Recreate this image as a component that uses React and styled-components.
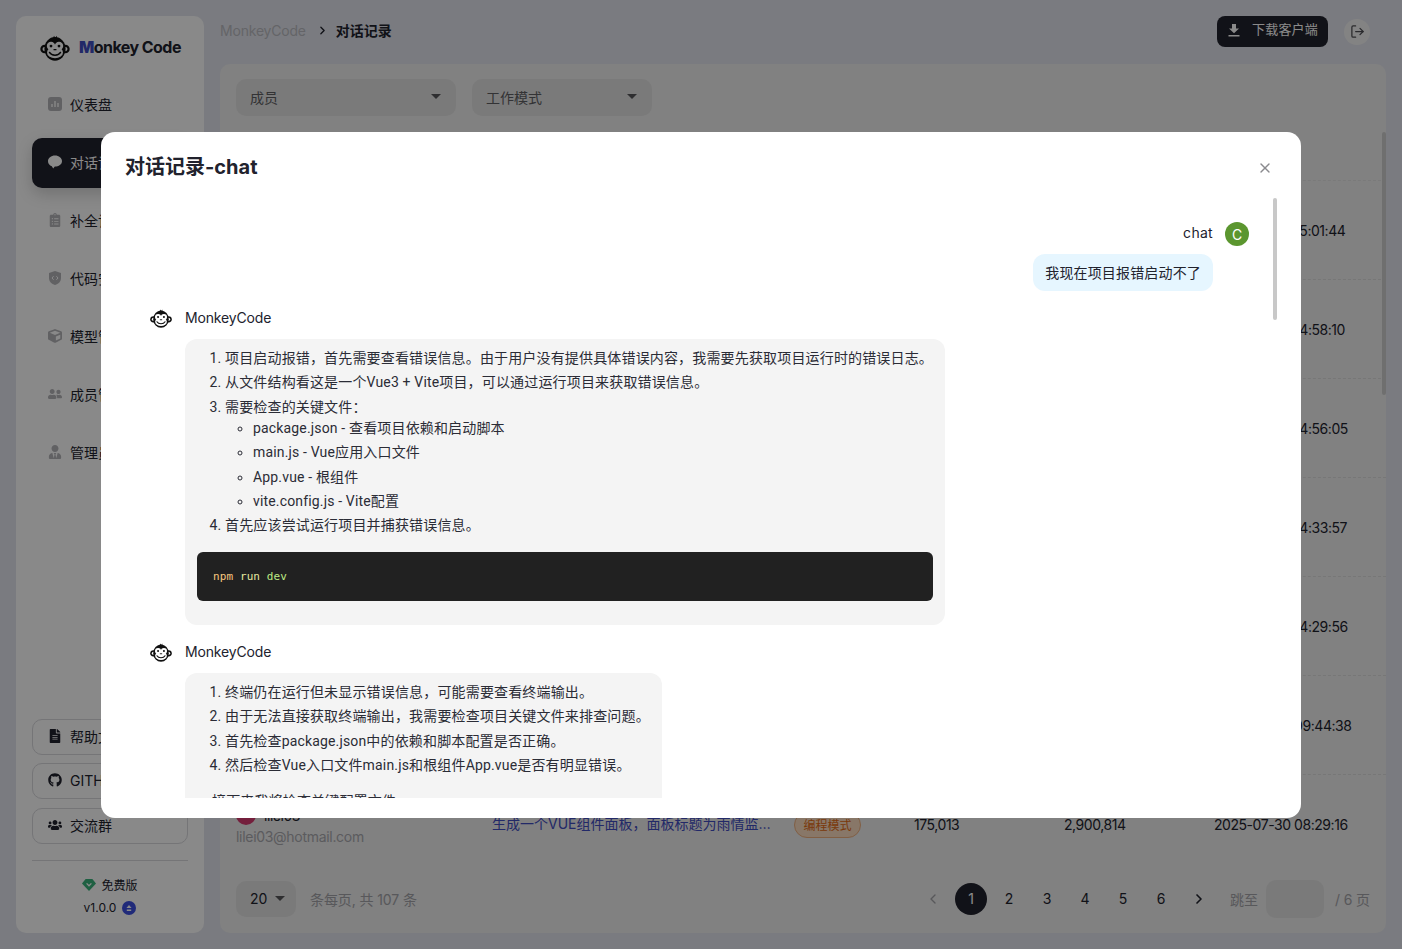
import React from "react";
import styled, { createGlobalStyle } from "styled-components";
import { FaClipboardList, FaCube, FaFileAlt, FaGithub, FaUserFriends, FaUsers, FaUserTie } from "react-icons/fa";
import { ChevronLeft, ChevronRight, LogOut, X } from "lucide-react";

const uiFont = `Inter, "Noto Sans CJK SC", sans-serif`;
const bodyFont = `Roboto, "Noto Sans CJK SC", sans-serif`;

const GlobalStyle = createGlobalStyle`
  html, body {
    margin: 0;
    height: 100%;
    overflow: hidden;
  }
  body {
    background: #e2e4ec;
    color: #21222d;
    font-family: ${uiFont};
    font-size: 14px;
  }
  * {
    box-sizing: border-box;
  }
`;

const Shell = styled.div`
  display: flex;
  gap: 16px;
  height: 949px;
  padding: 0 16px 16px;
`;

const Sidebar = styled.aside`
  display: flex;
  flex-direction: column;
  flex: 0 0 188px;
  margin-top: 16px;
  padding: 0 16px;
  background: #fdfdfd;
  border-radius: 10px;
`;

const Brand = styled.div`
  display: flex;
  align-items: center;
  gap: 9px;
  height: 64px;
  padding-left: 8px;
  font-size: 16px;
  font-weight: 700;
  letter-spacing: -0.55px;
  b {
    color: #3f4cc0;
  }
  span {
    padding-bottom: 3px;
  }
`;

const NavList = styled.nav`
  display: flex;
  flex-direction: column;
  gap: 8px;
`;

const NavItem = styled.div`
  display: flex;
  align-items: center;
  gap: 8px;
  height: 50px;
  padding: 0 0 2px 16px;
  border-radius: 10px;
  color: ${(p) => (p.$active ? "#ffffff" : "#21222d")};
  background: ${(p) => (p.$active ? "#21222d" : "transparent")};
  box-shadow: ${(p) => (p.$active ? "0 6px 16px rgba(0,0,0,.18)" : "none")};
  svg {
    flex: 0 0 14px;
    color: ${(p) => (p.$active ? "#ffffff" : "#b4b4b8")};
  }
`;

const SideFoot = styled.div`
  margin-top: auto;
  display: flex;
  flex-direction: column;
`;

const LinkButton = styled.div`
  display: flex;
  align-items: center;
  gap: 8px;
  height: 36px;
  margin-bottom: 8.5px;
  padding: 0 0 2px 15px;
  border: 1px solid #d8d8dc;
  border-radius: 10px;
  svg {
    flex: 0 0 14px;
  }
`;

const Divider = styled.div`
  margin-top: 8px;
  border-top: 1px solid #d8d8dc;
`;

const Plan = styled.div`
  display: flex;
  align-items: center;
  justify-content: center;
  gap: 5px;
  margin-top: 15px;
  font-size: 12px;
`;

const Version = styled.div`
  display: flex;
  align-items: center;
  justify-content: center;
  gap: 6px;
  margin: 7px 0 18px;
  font-size: 12px;
`;

const Main = styled.main`
  display: flex;
  flex-direction: column;
  flex: 1;
  min-width: 0;
`;

const TopBar = styled.header`
  display: flex;
  align-items: center;
  flex: 0 0 64px;
  padding-bottom: 1px;
`;

const Crumbs = styled.div`
  display: flex;
  align-items: center;
  gap: 8px;
  flex: 1;
  padding-bottom: 3px;
  svg {
    margin: 0 -1px 0 2px;
  }
`;

const CrumbRoot = styled.span`
  color: #b9bac0;
  letter-spacing: -0.2px;
`;

const CrumbHere = styled.span`
  font-weight: 700;
`;

const DownloadButton = styled.div`
  display: flex;
  align-items: center;
  gap: 11px;
  height: 31px;
  margin-right: 16px;
  padding: 0 10px 7px;
  color: #fff;
  background: #21222d;
  border-radius: 8px;
  font-size: 13px;
  letter-spacing: 0.2px;
  svg {
    margin-top: 4px;
  }
`;

const RoundButton = styled.div`
  display: flex;
  align-items: center;
  justify-content: center;
  width: 26px;
  height: 26px;
  margin-right: 16px;
  border-radius: 50%;
  background: #f3f3f3;
  color: #4d4d52;
`;

const Card = styled.section`
  display: flex;
  flex-direction: column;
  flex: 1;
  position: relative;
  background: #eeeeee;
  border-radius: 10px;
  overflow: hidden;
`;

const Filters = styled.div`
  display: flex;
  gap: 16px;
  flex: 0 0 68px;
  padding: 15px 16px 0;
`;

const Select = styled.div`
  display: flex;
  align-items: center;
  justify-content: space-between;
  width: ${(p) => p.$width}px;
  height: 37px;
  padding: 0 15px 2px 14px;
  background: #e2e2e2;
  border-radius: 10px;
  color: #5e5e63;
`;

const Caret = styled.i`
  display: block;
  width: 0;
  height: 0;
  border-left: 5px solid transparent;
  border-right: 5px solid transparent;
  border-top: 5px solid #55555a;
`;

const Table = styled.div`
  flex: 0 0 742px;
  padding-left: 16px;
  overflow: hidden;
`;

const Row = styled.div`
  display: grid;
  grid-template-columns: 256px 302px 120px 150px 150px 1fr;
  align-items: center;
  height: ${(p) => (p.$head ? 49 : 99)}px;
  border-bottom: 1px dashed ${(p) => (p.$head ? "#e2e2e2" : "#dcdcdc")};
  color: ${(p) => (p.$head ? "#77777c" : "#21222d")};
  letter-spacing: -0.45px;
  &:last-child {
    border-bottom: 0;
  }
`;

const User = styled.div`
  display: grid;
  grid-template-columns: 20px 1fr;
  column-gap: 8px;
  align-items: center;
  margin-top: 5px;
`;

const UserAvatar = styled.span`
  width: 20px;
  height: 20px;
  border-radius: 50%;
  background: #d63a70;
`;

const Email = styled.span`
  grid-column: 1 / -1;
  color: #a9a9ae;
  line-height: 24px;
  letter-spacing: -0.3px;
`;

const Prompt = styled.div`
  width: 282px;
  padding-bottom: 3px;
  color: #3f4cc0;
  letter-spacing: 0;
  white-space: nowrap;
  overflow: hidden;
  text-overflow: ellipsis;
`;

const Tag = styled.span`
  display: inline-flex;
  align-items: center;
  justify-content: center;
  width: 67px;
  height: 26px;
  border: 1px solid #eeaf7e;
  border-radius: 13px;
  background: #fbdcc0;
  color: #e26a14;
  font-size: 12px;
  letter-spacing: 0;
`;

const Pager = styled.div`
  display: flex;
  align-items: center;
  padding: 0 16px 10px;
  flex: 1;
  color: #a3a3a8;
  letter-spacing: -0.1px;
`;

const PageSize = styled.div`
  display: flex;
  align-items: center;
  gap: 8px;
  width: 60px;
  height: 36px;
  margin-right: 14px;
  padding-left: 14px;
  background: #e2e2e2;
  border-radius: 10px;
  color: #21222d;
`;

const PageSpacer = styled.div`
  flex: 1;
`;

const PageButton = styled.span`
  display: flex;
  align-items: center;
  justify-content: center;
  width: 32px;
  height: 32px;
  margin-right: ${(p) => (p.$last ? 15 : 6)}px;
  border-radius: 50%;
  color: ${(p) => (p.$active ? "#fff" : p.$muted ? "#a3a3a8" : "#21222d")};
  background: ${(p) => (p.$active ? "#21222d" : "transparent")};
`;

const JumpInput = styled.div`
  width: 58px;
  height: 38px;
  margin: 0 11px 0 8px;
  background: #e2e2e2;
  border-radius: 10px;
`;

const TableThumb = styled.div`
  position: absolute;
  top: 68px;
  right: 0;
  width: 4px;
  height: 263px;
  border-radius: 2px;
  background: #cdcdcd;
`;

const Overlay = styled.div`
  position: fixed;
  inset: 0;
  display: flex;
  justify-content: center;
  padding-top: 132px;
  background: rgba(0, 0, 0, 0.46);
`;

const Modal = styled.div`
  position: relative;
  display: flex;
  flex-direction: column;
  width: 1200px;
  height: 686px;
  padding-bottom: 20px;
  background: #ffffff;
  border-radius: 14px;
`;

const ModalHead = styled.div`
  display: flex;
  align-items: center;
  justify-content: space-between;
  flex: 0 0 66px;
  padding: 1px 28px 0 24px;
  font-size: 20px;
  font-weight: 700;
  color: #21222d;
  svg {
    margin-top: 4px;
    color: #8a8a8e;
  }
`;

const ChatBody = styled.div`
  flex: 1;
  padding: 24px 52px 0 49px;
  overflow: hidden;
`;

const ChatThumb = styled.div`
  position: absolute;
  top: 66px;
  right: 24px;
  width: 4px;
  height: 122px;
  border-radius: 2px;
  background: #c8c8c8;
`;

const UserLine = styled.div`
  display: flex;
  align-items: center;
  justify-content: flex-end;
  gap: 12px;
  height: 24px;
`;

const UserName = styled.span`
  margin-bottom: 4px;
  letter-spacing: 0.3px;
`;

const ChatAvatar = styled.span`
  display: flex;
  align-items: center;
  justify-content: center;
  width: 24px;
  height: 24px;
  border-radius: 50%;
  background: #5b962f;
  color: #fff;
  font-size: 14px;
`;

const UserBubble = styled.div`
  width: fit-content;
  margin: 8px 36px 0 auto;
  padding: 9px 12px 7px;
  background: #e6f6ff;
  border-radius: 12px;
  font-family: ${bodyFont};
  line-height: 21px;
  letter-spacing: 0.16px;
  color: #21222d;
`;

const BotLine = styled.div`
  display: flex;
  align-items: center;
  gap: 13px;
  height: 22px;
  margin-top: 17px;
  letter-spacing: -0.15px;
  span {
    padding-bottom: 3px;
  }
`;

const BotBubble = styled.div`
  width: fit-content;
  max-width: 760px;
  margin: 9px 0 0 35px;
  padding: 9px 12px 12px;
  background: #f4f4f4;
  border-radius: 12px;
  font-family: ${bodyFont};
  line-height: 21px;
  letter-spacing: 0.16px;
  color: #2b2c36;
`;

const Ordered = styled.ol`
  margin: 0;
  padding-left: 28px;
`;

const Bullets = styled.ul`
  margin: 0;
  padding-left: 28px;
  list-style: circle;
`;

const Item = styled.li`
  margin-bottom: 3.4px;
  ${Bullets} &:last-child {
    margin-bottom: 0;
  }
`;

const Note = styled.p`
  margin: 15px 0 0 15px;
`;

const CodeBlock = styled.pre`
  margin: 15.5px 0 12px;
  padding: 16px;
  height: 49px;
  background: #212121;
  border-radius: 6px;
  font-family: "DejaVu Sans Mono", monospace;
  font-size: 11px;
  font-weight: 500;
  letter-spacing: 0.1px;
  line-height: 17px;
  color: #c6e38a;
`;

const CodeWord = styled.span`
  color: ${(p) => p.$color};
`;

const Monkey = ({ size = 30 }) => (
  <svg width={size} height={size * 0.87} viewBox="0 0 30 26">
    <path d="M13 3.5 L14 .8 L15.2 2.8 L17 .8 L16.8 3.8 Z" fill="#111" />
    <circle cx="4.6" cy="14" r="4.3" fill="#111" />
    <circle cx="25.4" cy="14" r="4.3" fill="#111" />
    <circle cx="4.6" cy="14" r="2.1" fill="#fff" />
    <circle cx="25.4" cy="14" r="2.1" fill="#fff" />
    <ellipse cx="15" cy="13.8" rx="10.6" ry="11.8" fill="#111" />
    <circle cx="11" cy="11" r="4.2" fill="#fff" />
    <circle cx="19" cy="11" r="4.2" fill="#fff" />
    <ellipse cx="15" cy="17.4" rx="8" ry="5.9" fill="#fff" />
    <circle cx="11" cy="11" r="1.4" fill="#111" />
    <circle cx="19" cy="11" r="1.4" fill="#111" />
    <path d="M9.5 17.4 C11.5 21 18.5 21 20.5 17.4" fill="none" stroke="#111" strokeWidth="1.5" strokeLinecap="round" />
    <path d="M14 14.6 H16" stroke="#111" strokeWidth="1.2" strokeLinecap="round" />
  </svg>
);

const ChartIcon = () => (
  <svg width="14" height="14" viewBox="0 0 14 14">
    <rect width="14" height="14" rx="3" fill="currentColor" />
    <path d="M4 10V7M7 10V4M10 10V6" stroke="#fff" strokeWidth="1.3" />
  </svg>
);

const BubbleIcon = () => (
  <svg width="14" height="14" viewBox="0 0 14 14">
    <path d="M7 0.5C3.1 .5 0 3 0 6.2c0 2.3 1.5 4.2 3.8 5.1L5.2 13.5l1.6-1.9C10.8 11.6 14 9.3 14 6.2 14 3 10.9 .5 7 .5Z" fill="currentColor" />
  </svg>
);

const ShieldIcon = () => (
  <svg width="14" height="14" viewBox="0 0 14 14">
    <path d="M7 0 13 2V7C13 10.5 10.5 13 7 14 3.5 13 1 10.5 1 7V2Z" fill="currentColor" />
    <path d="M5.6 5.2 4 7l1.6 1.8M8.4 5.2 10 7 8.4 8.8" fill="none" stroke="#fff" strokeWidth="1" />
  </svg>
);

const DownloadIcon = () => (
  <svg width="14" height="14" viewBox="0 0 14 14">
    <path d="M5 1H9V5.5H12L7 10.2 2 5.5H5Z M1.5 12H12.5V13.5H1.5Z" fill="currentColor" />
  </svg>
);

const PlanIcon = () => (
  <svg width="14" height="12" viewBox="0 0 14 12">
    <path d="M3.6 0H10.4L14 4.6 7 12 0 4.6Z" fill="#38b27b" />
    <path d="M4.6 4.4 7 6.8 9.4 4.4" fill="none" stroke="#fff" strokeWidth="1.3" />
  </svg>
);

const UpdateIcon = () => (
  <svg width="14" height="14" viewBox="0 0 14 14">
    <circle cx="7" cy="7" r="7" fill="#3b4ee0" />
    <path d="M7 4 9.6 7H4.4Z M4.8 8.4H9.2V10H4.8Z" fill="#fff" />
  </svg>
);

const navItems = [
  { label: "仪表盘", icon: <ChartIcon /> },
  { label: "对话记录", icon: <BubbleIcon />, active: true },
  { label: "补全记录", icon: <FaClipboardList size={14} /> },
  { label: "代码安全", icon: <ShieldIcon /> },
  { label: "模型管理", icon: <FaCube size={14} /> },
  { label: "成员管理", icon: <FaUserFriends size={14} /> },
  { label: "管理员", icon: <FaUserTie size={14} /> },
];

const rows = [
  { name: "chat", email: "chat@monkeycode.ai", prompt: "我现在项目报错启动不了", input: "82,410", output: "1,204,332", time: "2025-07-30 15:01:44" },
  { name: "chat", email: "chat@monkeycode.ai", prompt: "帮我写一个登录页面", input: "61,225", output: "903,118", time: "2025-07-30 14:58:10" },
  { name: "chat", email: "chat@monkeycode.ai", prompt: "检查项目依赖和启动脚本", input: "44,870", output: "512,096", time: "2025-07-30 14:56:05" },
  { name: "chat", email: "chat@monkeycode.ai", prompt: "优化首页加载速度", input: "93,518", output: "1,480,227", time: "2025-07-30 14:33:57" },
  { name: "chat", email: "chat@monkeycode.ai", prompt: "添加一个用户列表组件", input: "37,602", output: "641,950", time: "2025-07-30 14:29:56" },
  { name: "lilei03", email: "lilei03@hotmail.com", prompt: "生成一个图表组件", input: "120,744", output: "2,118,605", time: "2025-07-30 09:44:38" },
  { name: "lilei03", email: "lilei03@hotmail.com", prompt: "生成一个VUE组件面板，面板标题为雨情监测信息展示", input: "175,013", output: "2,900,814", time: "2025-07-30 08:29:16" },
];

const App = () => (
  <>
    <GlobalStyle />
    <Shell>
      <Sidebar>
        <Brand>
          <Monkey />
          <span><b>M</b>onkey Code</span>
        </Brand>
        <NavList>
          {navItems.map((item) => (
            <NavItem key={item.label} $active={item.active}>
              {item.icon}
              {item.label}
            </NavItem>
          ))}
        </NavList>
        <SideFoot>
          <LinkButton><FaFileAlt size={14} />帮助文档</LinkButton>
          <LinkButton><FaGithub size={14} />GITHUB</LinkButton>
          <LinkButton><FaUsers size={14} />交流群</LinkButton>
          <Divider />
          <Plan><PlanIcon />免费版</Plan>
          <Version>v1.0.0 <UpdateIcon /></Version>
        </SideFoot>
      </Sidebar>

      <Main>
        <TopBar>
          <Crumbs>
            <CrumbRoot>MonkeyCode</CrumbRoot>
            <ChevronRight size={13} strokeWidth={2.5} />
            <CrumbHere>对话记录</CrumbHere>
          </Crumbs>
          <DownloadButton><DownloadIcon />下载客户端</DownloadButton>
          <RoundButton><LogOut size={15} /></RoundButton>
        </TopBar>
        <Card>
          <Filters>
            <Select $width={220}>成员<Caret /></Select>
            <Select $width={180}>工作模式<Caret /></Select>
          </Filters>
          <Table>
            <Row $head>
              <span>成员</span>
              <span>任务</span>
              <span>工作模式</span>
              <span>输入</span>
              <span>输出</span>
              <span>时间</span>
            </Row>
            {rows.map((row) => (
              <Row key={row.time}>
                <User>
                  <UserAvatar />
                  <span>{row.name}</span>
                  <Email>{row.email}</Email>
                </User>
                <Prompt>{row.prompt}</Prompt>
                <div><Tag>编程模式</Tag></div>
                <span>{row.input}</span>
                <span>{row.output}</span>
                <span>{row.time}</span>
              </Row>
            ))}
          </Table>
          <Pager>
            <PageSize>20<Caret /></PageSize>
            条每页, 共 107 条
            <PageSpacer />
            <PageButton $muted><ChevronLeft size={16} /></PageButton>
            <PageButton $active>1</PageButton>
            <PageButton>2</PageButton>
            <PageButton>3</PageButton>
            <PageButton>4</PageButton>
            <PageButton>5</PageButton>
            <PageButton>6</PageButton>
            <PageButton $last><ChevronRight size={16} strokeWidth={2.5} /></PageButton>
            跳至
            <JumpInput />
            / 6 页
          </Pager>
          <TableThumb />
        </Card>
      </Main>
    </Shell>

    <Overlay>
      <Modal>
        <ModalHead>
          对话记录-chat
          <X size={16} />
        </ModalHead>
        <ChatBody>
          <UserLine>
            <UserName>chat</UserName>
            <ChatAvatar>C</ChatAvatar>
          </UserLine>
          <UserBubble>我现在项目报错启动不了</UserBubble>

          <BotLine><Monkey size={22} /><span>MonkeyCode</span></BotLine>
          <BotBubble>
            <Ordered>
              <Item>项目启动报错，首先需要查看错误信息。由于用户没有提供具体错误内容，我需要先获取项目运行时的错误日志。</Item>
              <Item>从文件结构看这是一个Vue3 + Vite项目，可以通过运行项目来获取错误信息。</Item>
              <Item>
                需要检查的关键文件：
                <Bullets>
                  <Item>package.json - 查看项目依赖和启动脚本</Item>
                  <Item>main.js - Vue应用入口文件</Item>
                  <Item>App.vue - 根组件</Item>
                  <Item>vite.config.js - Vite配置</Item>
                </Bullets>
              </Item>
              <Item>首先应该尝试运行项目并捕获错误信息。</Item>
            </Ordered>
            <CodeBlock>
              <CodeWord $color="#f7c77f">npm</CodeWord> <CodeWord $color="#e6eaa0">run</CodeWord> <CodeWord $color="#bdea84">dev</CodeWord>
            </CodeBlock>
          </BotBubble>

          <BotLine><Monkey size={22} /><span>MonkeyCode</span></BotLine>
          <BotBubble>
            <Ordered>
              <Item>终端仍在运行但未显示错误信息，可能需要查看终端输出。</Item>
              <Item>由于无法直接获取终端输出，我需要检查项目关键文件来排查问题。</Item>
              <Item>首先检查package.json中的依赖和脚本配置是否正确。</Item>
              <Item>然后检查Vue入口文件main.js和根组件App.vue是否有明显错误。</Item>
            </Ordered>
            <Note>接下来我将检查关键配置文件。</Note>
          </BotBubble>
        </ChatBody>
        <ChatThumb />
      </Modal>
    </Overlay>
  </>
);

export default App;
